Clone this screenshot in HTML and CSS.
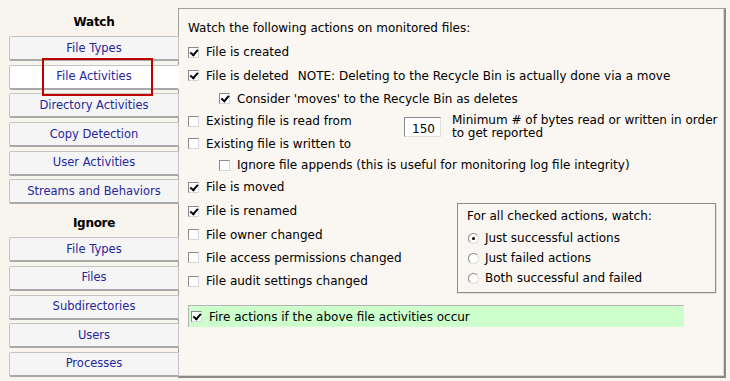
FILE: index.html
```html
<!DOCTYPE html>
<html lang="en">
<head>
    <meta charset="UTF-8">
    <title>File Activities</title>
    <link rel="stylesheet" href="styles.css">
</head>
<body>
    <div class="app">
        <nav class="nav">
            <div class="nav-head">Watch</div>
            <button class="nav-btn">File Types</button>
            <button class="nav-btn active">File Activities</button>
            <button class="nav-btn">Directory Activities</button>
            <button class="nav-btn">Copy Detection</button>
            <button class="nav-btn">User Activities</button>
            <button class="nav-btn">Streams and Behaviors</button>
            <div class="nav-head nav-head_ignore">Ignore</div>
            <button class="nav-btn">File Types</button>
            <button class="nav-btn">Files</button>
            <button class="nav-btn">Subdirectories</button>
            <button class="nav-btn">Users</button>
            <button class="nav-btn">Processes</button>
        </nav>

        <!-- annotation box round the selected tab -->
        <div class="highlight"></div>

        <section class="panel">
            <div class="row row-title">Watch the following actions on monitored files:</div>
            <div class="row h24"><span class="cb checked"></span>File is created</div>
            <div class="row h23"><span class="cb checked"></span>File is deleted<span class="note">NOTE: Deleting to the Recycle Bin is actually done via a move</span></div>
            <div class="row h23 sub"><span class="cb checked"></span>Consider 'moves' to the Recycle Bin as deletes</div>
            <div class="row row-read">
                <span class="cb"></span><span class="read-label">Existing file is read from</span>
                <span class="num-input">150</span>
                <span class="min-text">Minimum # of bytes read or written in order<br>to get reported</span>
            </div>
            <div class="row h23"><span class="cb"></span>Existing file is written to</div>
            <div class="row h20 sub"><span class="cb"></span>Ignore file appends (this is useful for monitoring log file integrity)</div>

            <div class="lower">
                <div class="lower-rows">
                    <div class="row h24"><span class="cb checked"></span>File is moved</div>
                    <div class="row h24"><span class="cb checked"></span>File is renamed</div>
                    <div class="row h23"><span class="cb"></span>File owner changed</div>
                    <div class="row h23"><span class="cb"></span>File access permissions changed</div>
                    <div class="row h24"><span class="cb"></span>File audit settings changed</div>
                </div>
                <fieldset class="group">
                    <div class="group-title">For all checked actions, watch:</div>
                    <div class="radio-row"><span class="radio on"></span>Just successful actions</div>
                    <div class="radio-row"><span class="radio"></span>Just failed actions</div>
                    <div class="radio-row"><span class="radio"></span>Both successful and failed</div>
                </fieldset>
            </div>

            <div class="fire-bar"><span class="cb checked"></span>Fire actions if the above file activities occur</div>
        </section>
    </div>
</body>
</html>
```

FILE: styles.css
```css
body {
    margin: 0;
    background: #f8f4ee;
    font-family: "DejaVu Sans", Verdana, sans-serif;
    font-size: 12px;
    color: #000;
    width: 730px;
    height: 381px;
    overflow: hidden;
}

.app {
    display: flex;
    position: relative;
    padding: 8px 0 0 9px;
}

.nav {
    width: 170px;
    display: flex;
    flex-direction: column;
    margin-right: -1px;
    position: relative;
    z-index: 1;
}

.nav-head {
    height: 28px;
    display: flex;
    align-items: center;
    justify-content: center;
    font-weight: bold;
    font-size: 12px;
    letter-spacing: -0.3px;
}

.nav-head_ignore {
    height: 29px;
    padding-top: 1px;
    box-sizing: border-box;
}

.nav-btn {
    height: 25px;
    margin-bottom: 3.7px;
    padding: 0 0 1px 0;
    background: #f5f5f5;
    border: 1px solid #c4c4c4;
    border-bottom: 2px solid #a8a8a8;
    border-radius: 2px 0 0 2px;
    color: #26269c;
    font-family: "DejaVu Sans", Verdana, sans-serif;
    font-size: 11.5px;
    cursor: pointer;
}

.nav-btn.active {
    background: #fff;
    border-right-color: #fff;
}

.highlight {
    position: absolute;
    left: 42px;
    top: 58px;
    width: 107px;
    height: 34px;
    border: 2px solid #c00000;
    z-index: 2;
}

.panel {
    width: 548px;
    height: 370px;
    box-sizing: border-box;
    background: #faf6f1;
    border: 1px solid #a29f9b;
    border-right: 2px solid #8c8a87;
    border-bottom: 2px solid #8c8a87;
    box-shadow: inset -1px -1px 0 #d8d4cf;
    padding: 7px 0 0 9px;
}

.row {
    display: flex;
    align-items: center;
    white-space: nowrap;
}

.row-title { height: 24px; }
.h24 { height: 24px; }
.h23 { height: 23px; }
.h20 { height: 20px; }

.sub {
    padding-left: 31px;
}

.note {
    margin-left: 9px;
}

.cb {
    width: 11px;
    height: 11px;
    box-sizing: border-box;
    border: 1px solid #8a8a8a;
    border-right-color: #d6d6d6;
    border-bottom-color: #d6d6d6;
    background: #fff;
    margin-right: 7px;
    flex-shrink: 0;
    position: relative;
}

.cb.checked::after {
    content: "";
    position: absolute;
    left: 1px;
    top: 0px;
    width: 6px;
    height: 3px;
    border-left: 2px solid #000;
    border-bottom: 2px solid #000;
    transform: rotate(-50deg) translate(-1px, 1px);
    transform-origin: center;
}

.row-read {
    height: 22px;
    align-items: flex-start;
}

.row-read .cb {
    margin-top: 6px;
}

.read-label {
    width: 198px;
    line-height: 22px;
}

.num-input {
    width: 37px;
    height: 20px;
    box-sizing: border-box;
    margin-top: 7px;
    border: 1px solid #8a8a8a;
    border-right-color: #e0e0e0;
    border-bottom-color: #e0e0e0;
    background: #fff;
    padding: 4px 0 0 7px;
    line-height: 14px;
}

.min-text {
    margin: 4px 0 0 11px;
    line-height: 13px;
}

.lower {
    display: flex;
}

.lower-rows {
    width: 270px;
}

.group {
    margin: 28px 8px 0 auto;
    width: 260px;
    height: 90px;
    box-sizing: border-box;
    border: 1px solid #8c8c8c;
    box-shadow: 1px 1px 0 #e6e2dc;
    padding: 4px 0 0 9px;
}

.group-title {
    height: 16px;
    line-height: 16px;
    margin-bottom: 4px;
}

.radio-row {
    display: flex;
    align-items: center;
    height: 20px;
    white-space: nowrap;
}

.radio {
    width: 11px;
    height: 11px;
    box-sizing: border-box;
    border-radius: 50%;
    border: 1px solid #8a8a8a;
    border-right-color: #dcdcdc;
    border-bottom-color: #dcdcdc;
    background: #fff;
    margin: 0 6px 0 1px;
    position: relative;
}

.radio.on::after {
    content: "";
    position: absolute;
    left: 3px;
    top: 3px;
    width: 3px;
    height: 3px;
    border-radius: 50%;
    background: #000;
}

.fire-bar {
    display: flex;
    align-items: center;
    margin: 12px 0 0 0;
    width: 496px;
    height: 22px;
    box-sizing: border-box;
    background: #ccffcc;
    border-top: 1px solid #b4b4b4;
    border-left: 1px solid #b4b4b4;
    padding-left: 2px;
    white-space: nowrap;
}
```
